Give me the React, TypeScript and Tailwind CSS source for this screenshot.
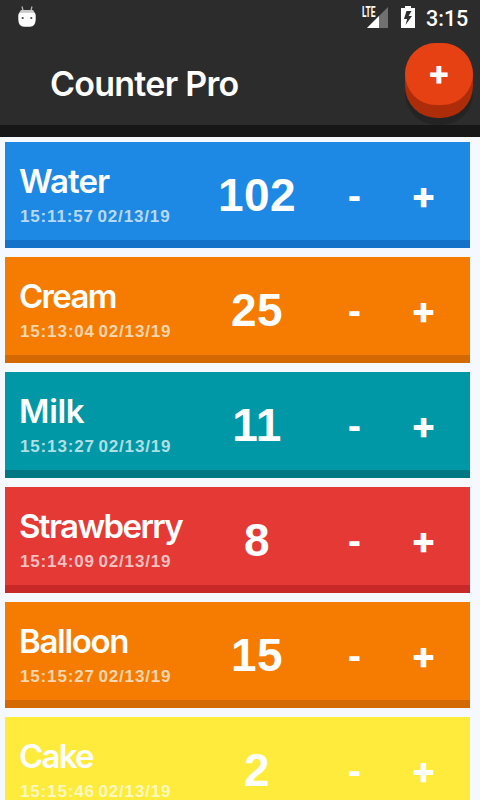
import { useState } from "react";
import clsx from "clsx";

type Counter = {
  name: string;
  updated: string;
  value: number;
  color: string;
  tracking: string;
};

const INITIAL: Counter[] = [
  { name: "Water", updated: "15:11:57 02/13/19", value: 102, color: "bg-[#1e88e5] border-[#1472c9]", tracking: "tracking-[-0.9px]" },
  { name: "Cream", updated: "15:13:04 02/13/19", value: 25, color: "bg-[#f57c00] border-[#d36900]", tracking: "tracking-[-1.7px]" },
  { name: "Milk", updated: "15:13:27 02/13/19", value: 11, color: "bg-[#0097a7] border-[#007883]", tracking: "tracking-[-0.3px]" },
  { name: "Strawberry", updated: "15:14:09 02/13/19", value: 8, color: "bg-[#e53935] border-[#c82828]", tracking: "tracking-[-1.6px]" },
  { name: "Balloon", updated: "15:15:27 02/13/19", value: 15, color: "bg-[#f57c00] border-[#d36900]", tracking: "tracking-[-1.3px]" },
  { name: "Cake", updated: "15:15:46 02/13/19", value: 2, color: "bg-[#ffeb3b] border-[#e0cc20]", tracking: "tracking-[-1.8px]" },
];

function StatusBar() {
  return (
    <div className="flex h-9 items-start justify-between pl-[18px] pr-3 pt-[5px] text-white">
      <svg width="18" height="22" viewBox="0 0 18 22">
        <path d="M4 1.5l1 4M14 1.5l-1 4" stroke="#bbb" strokeWidth="1.2" />
        <path d="M3 5h12l2 3H1z" fill="#c8c8c8" />
        <path d="M0.3 10Q0.3 7.7 2.5 7.7H15.5Q17.7 7.7 17.7 10V15Q17.2 21.7 12 21.7H6Q0.8 21.7 0.3 15z" fill="#fff" />
        <circle cx="4.7" cy="13" r="1.1" fill="#444" />
        <circle cx="13.3" cy="13" r="1.1" fill="#444" />
      </svg>
      <div className="flex items-start">
        <svg width="27" height="24" viewBox="0 0 27 24">
          <path d="M26 2v21H5z" fill="#707070" />
          <path d="M17 11v12H5z" fill="#fff" />
          <path d="M0 0h14v13H0z" fill="#2c2c2c" />
          <text x="0" y="12" fill="#fff" fontFamily="Roboto, sans-serif" fontSize="14" fontWeight="700" textLength="13.5" lengthAdjust="spacingAndGlyphs">
            LTE
          </text>
        </svg>
        <svg className="ml-[12px]" width="14" height="23" viewBox="0 0 14 23">
          <path d="M4 1h6v2h4v20H0V3h4z" fill="#fff" />
          <path d="M10.5 6H5.5L3 14h3.2L4.5 20 11 11H7.6z" fill="#2c2c2c" />
        </svg>
        <span className="ml-[11px] mt-[2px] w-[42px] font-[Roboto,sans-serif] text-[21.5px] font-medium leading-6">3:15</span>
      </div>
    </div>
  );
}

function CounterCard({ counter, onChange }: { counter: Counter; onChange: (delta: number) => void }) {
  return (
    <li className={clsx("flex h-[106px] shrink-0 border-b-8 text-white", counter.color)}>
      <div className="w-[189px] whitespace-nowrap pl-[14px] pt-[18px]">
        <h2 className={clsx("text-[33px] font-semibold leading-[42px]", counter.tracking)}>{counter.name}</h2>
        <p className="pl-px pt-[5px] font-['Liberation_Sans',sans-serif] text-[17px] font-bold leading-5 tracking-[0.85px] [word-spacing:-2px] text-white/70">
          {counter.updated}
        </p>
      </div>
      <div className="w-[126px] pt-[26px] text-center font-['Liberation_Sans',sans-serif] text-[46px] font-bold leading-[54px] tracking-[0.5px]">
        {counter.value}
      </div>
      <button className="w-[69px] pt-[8px] font-['Liberation_Sans',sans-serif] text-[40px] font-bold" onClick={() => onChange(-1)}>-</button>
      <button className="w-[69px] pt-[8px] text-[38px] font-extrabold" onClick={() => onChange(1)}>+</button>
    </li>
  );
}

export default function App() {
  const [counters, setCounters] = useState(INITIAL);

  function change(index: number, delta: number) {
    setCounters((list) => list.map((c, i) => (i === index ? { ...c, value: c.value + delta } : c)));
  }

  return (
    <div className="flex h-[800px] w-[480px] flex-col overflow-hidden bg-[#f5f9ff] font-[Inter,sans-serif]">
      <header className="h-[137px] shrink-0 border-b-[12px] border-[#171717] bg-[#2c2c2c]">
        <StatusBar />
        <div className="flex justify-between pl-[50px] pr-[7px] pt-[7px]">
          <h1 className="pt-[17px] text-[34px] font-semibold leading-[48px] tracking-[-0.75px] text-white">Counter Pro</h1>
          <div className="h-[82px] rounded-[32px] bg-[#242424]">
            <div className="h-[75px] rounded-[32px] bg-[#ad2d0a]">
              <button className="h-[62px] w-[68px] rounded-[31px] bg-[#e64112] pb-[3px] text-[34px] font-extrabold text-white">+</button>
            </div>
          </div>
        </div>
      </header>

      <ul className="flex flex-col gap-[9px] pl-[5px] pr-[10px] pt-[5px]">
        {counters.map((c, i) => (
          <CounterCard key={c.name} counter={c} onChange={(delta) => change(i, delta)} />
        ))}
      </ul>
    </div>
  );
}
